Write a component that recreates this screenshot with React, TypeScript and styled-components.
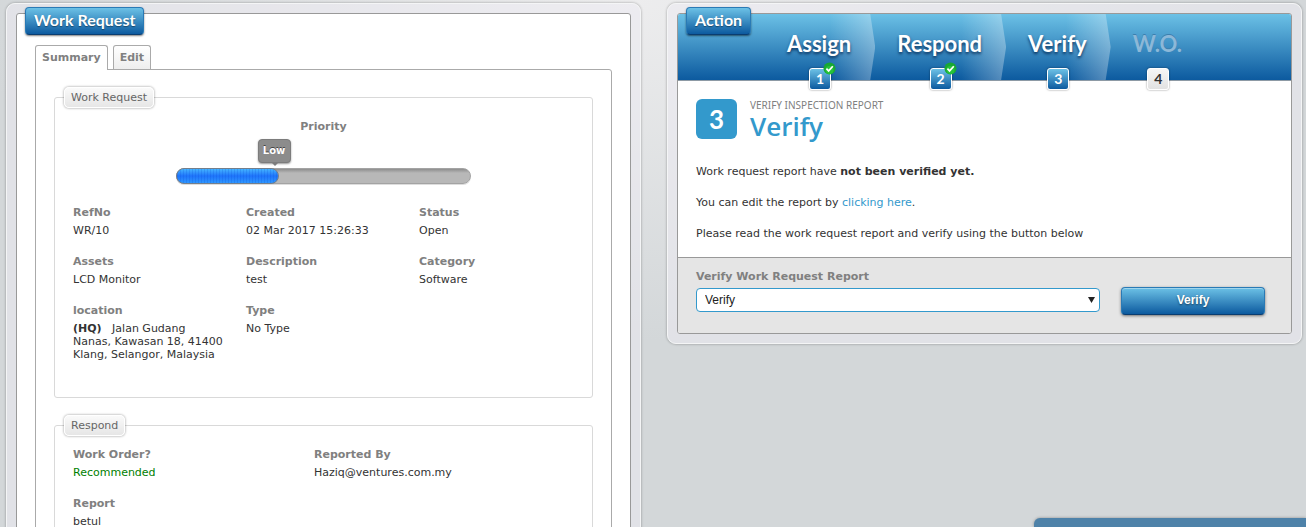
import React from "react";
import styled, { createGlobalStyle, css } from "styled-components";

const bodyFont = `Verdana, "DejaVu Sans", sans-serif`;
const headFont = `"Trebuchet MS", Lato, sans-serif`;
const blueFade = "linear-gradient(#6cc1e6, #0c5a9f)";

const GlobalStyle = createGlobalStyle`
  *, *::before, *::after { box-sizing: border-box; }
  body {
    margin: 0;
    font: 11px/13px ${bodyFont};
    color: #333;
    background: #d3d7d9;
  }
  p, h1, h2, dl, dd, ol { margin: 0; padding: 0; }
`;

const Page = styled.main`
  height: 100vh;
  overflow: hidden;
  display: grid;
  grid-template-columns: 1fr 1fr;
  align-items: start;
  gap: 26px;
  padding: 3px 4px 0 6px;
  background: radial-gradient(ellipse 50% 340px at 48% 0, #ededee, #d3d7d9);
`;

const Frame = styled.section`
  padding: 9px;
  border: 1px solid #f4f5f6;
  border-radius: 9px;
  background: rgba(236, 235, 243, 0.55);
  box-shadow: 0 0 2px 1px rgba(0, 0, 0, 0.16);
`;

const Panel = styled.div`
  position: relative;
  border: 1px solid #999;
  border-radius: 3px;
  background: #fff;
`;

const PanelTitle = styled.h1`
  position: absolute;
  z-index: 2;
  top: -7px;
  left: 8px;
  padding: 0 8px;
  height: 28px;
  border: 1px solid #2a7ab5;
  border-bottom-color: #0a3d70;
  border-radius: 4px;
  background: ${blueFade};
  box-shadow: 0 1px 2px rgba(0, 0, 0, 0.5);
  color: #fff;
  font: bold 16px/24px ${headFont};
  text-shadow: 0 1px 1px rgba(0, 0, 0, 0.4);
  white-space: nowrap;
`;

const TabArea = styled.div`
  padding: 31px 18px 18px;
`;

const TabList = styled.div`
  display: flex;
  align-items: flex-end;
  gap: 5px;
`;

const Tab = styled.button<{ $active?: boolean }>`
  height: 24px;
  padding: 0 6px;
  border: 1px solid #aaa;
  border-bottom: 0;
  border-radius: 3px 3px 0 0;
  background: linear-gradient(#fff, #eee);
  color: #808080;
  font: bold 11px/22px ${bodyFont};
  ${(p) =>
    p.$active &&
    css`
      position: relative;
      height: 25px;
      margin-bottom: -1px;
      background: #fff;
    `}
`;

const TabBody = styled.div`
  padding: 17px 18px 18px;
  border: 1px solid #aaa;
  border-radius: 0 3px 3px 3px;
`;

const Group = styled.fieldset<{ $bottom?: number }>`
  min-width: 0;
  margin: 0 0 17px;
  padding: 12px 0 ${(p) => p.$bottom ?? 18}px 18px;
  border: 1px solid #d9d9d9;
  border-radius: 3px;
`;

const GroupTitle = styled.legend`
  height: 21px;
  margin-left: -9px;
  padding: 0 6px;
  border: 1px solid #fff;
  border-radius: 5px;
  background: linear-gradient(#fafafa, #e6e6e6);
  box-shadow: 0 0 2px 1px rgba(0, 0, 0, 0.2);
  color: #666;
  line-height: 19px;
`;

const Caption = styled.h2`
  color: #808080;
  font: bold 11px/13px ${bodyFont};
`;

const Priority = styled.div`
  display: flex;
  flex-direction: column;
  align-items: center;
  gap: 35px;
  margin: 0 18px 22px 0;
`;

const Track = styled.div`
  width: 295px;
  height: 16px;
  border: 1px solid #a3a3a3;
  border-radius: 8px;
  background: linear-gradient(#8e8e8e, #b8b8b8 4px);
  box-shadow: 0 1px 0 #ddd;
`;

const TrackFill = styled.div`
  position: relative;
  height: 16px;
  margin: -1px;
  border: 1px solid #747f8c;
  border-radius: 8px;
  background:
    repeating-linear-gradient(90deg, rgba(0, 60, 200, 0.16) 0 1px, transparent 1px 3px),
    linear-gradient(#45b4ff, #1e74fb 50%, #2f97ff);
`;

const Bubble = styled.span`
  position: absolute;
  right: -13px;
  bottom: 20px;
  width: 33px;
  height: 24px;
  border: 1px solid #7c7c7c;
  border-radius: 4px;
  background: #8c8c8c;
  box-shadow: 0 1px 2px rgba(0, 0, 0, 0.4);
  color: #fff;
  font: bold 10px/22px ${bodyFont};
  text-align: center;
  text-shadow: 0 -1px 0 #444;
  &::after {
    content: "";
    position: absolute;
    top: 100%;
    left: 12px;
    border: 4px solid transparent;
    border-top-color: #7c7c7c;
    border-bottom: 0;
  }
`;

const Fields = styled.dl<{ $columns: number }>`
  display: grid;
  grid-template-columns: repeat(${(p) => p.$columns}, 1fr);
  row-gap: 18px;
  padding-right: ${(p) => (p.$columns === 2 ? 37 : 0)}px;
`;

const FieldBox = styled.div`
  padding-right: 20px;
  dt {
    margin-bottom: 5px;
    color: #808080;
    font-weight: bold;
  }
`;

const FieldValue = styled.dd<{ $good?: boolean }>`
  color: ${(p) => (p.$good ? "#008000" : "#333")};
`;

const Steps = styled.ol`
  display: flex;
  height: 67px;
  padding-left: 87px;
  border-bottom: 1px solid #8d9aa5;
  border-radius: 2px 2px 0 0;
  background: ${blueFade};
  list-style: none;
`;

const Step = styled.li<{ $off?: boolean }>`
  position: relative;
  padding: 0 24px 0 22px;
  color: ${(p) => (p.$off ? "#8cb8d8" : "#fff")};
  font: bold 22px/60px ${headFont};
  text-shadow: ${(p) => (p.$off ? "0 -1px 0 #3c7fae" : "0 2px 3px rgba(0, 30, 70, 0.8)")};
  &:not(:last-child)::after {
    content: "";
    position: absolute;
    inset: 0 0 0 auto;
    width: 45px;
    background: linear-gradient(90deg, transparent, rgba(255, 255, 255, 0.32));
    clip-path: polygon(0 0, 40px 0, 45px 50%, 40px 100%, 0 100%);
  }
`;

const StepLabel = styled.span`
  position: relative;
  z-index: 1;
`;

const StepNumber = styled.span<{ $off?: boolean }>`
  position: absolute;
  z-index: 2;
  bottom: -10px;
  left: 50%;
  width: 22px;
  height: 22px;
  margin-left: -11px;
  border: 1px solid #fff;
  border-radius: 3px;
  background: ${(p) => (p.$off ? "linear-gradient(#f6f6f6, #e2e2e2)" : blueFade)};
  box-shadow: 0 0 2px rgba(0, 0, 0, 0.5);
  color: ${(p) => (p.$off ? "#333" : "#fff")};
  font: bold 14px/19px ${headFont};
  text-align: center;
  text-shadow: none;
`;

const DoneMark = styled.svg`
  position: absolute;
  top: -7px;
  right: -6px;
  width: 13px;
  height: 13px;
`;

const Content = styled.div`
  padding: 18px 18px 17px;
  p {
    margin-top: 18px;
  }
`;

const StageHeader = styled.header`
  display: flex;
  gap: 13px;
  margin-bottom: 24px;
`;

const StageNumber = styled.div`
  width: 41px;
  height: 40px;
  border-radius: 6px;
  background: #3399cc;
  color: #fff;
  font: bold 26px/40px ${headFont};
  text-align: center;
`;

const StageText = styled.div`
  small {
    display: block;
    color: #808080;
    font: 10px/12px "Noto Sans", sans-serif;
  }
  h2 {
    color: #3399cc;
    font: 600 26px/30px "Trebuchet MS", "Open Sans", sans-serif;
  }
`;

const Link = styled.a`
  color: #3399cc;
  text-decoration: none;
`;

const ActionForm = styled.form`
  display: flex;
  align-items: flex-start;
  gap: 21px;
  padding: 12px 26px 18px 18px;
  border-top: 1px solid #999;
  border-radius: 0 0 2px 2px;
  background: #e5e5e5;
`;

const SelectField = styled.div`
  position: relative;
  flex: 1;
  label {
    display: block;
    margin-bottom: 5px;
    color: #808080;
    font-weight: bold;
  }
  select {
    display: block;
    width: 100%;
    height: 24px;
    padding: 0 8px;
    border: 1px solid #3399cc;
    border-radius: 4px;
    appearance: none;
    background: #fff;
    color: #222;
    font: 12px "Liberation Sans", Arial, sans-serif;
  }
  svg {
    position: absolute;
    right: 5px;
    bottom: 9px;
    width: 7px;
    height: 6px;
    pointer-events: none;
  }
`;

const SubmitButton = styled.button`
  width: 144px;
  height: 28px;
  margin-top: 17px;
  padding: 0 0 2px;
  border: 1px solid #2a7ab5;
  border-bottom-color: #0a3d70;
  border-radius: 4px;
  background: ${blueFade};
  box-shadow: 0 1px 3px rgba(0, 0, 0, 0.5), inset 0 1px 0 rgba(255, 255, 255, 0.35);
  color: #fff;
  font: bold 12px "Liberation Sans", Arial, sans-serif;
  text-shadow: 0 1px 2px rgba(0, 0, 0, 0.5);
`;

const ChatDock = styled.aside`
  position: fixed;
  right: 0;
  bottom: 0;
  width: 272px;
  height: 9px;
  border-radius: 6px 0 0 0;
  background: #4e82a9;
  box-shadow: 0 0 3px rgba(0, 0, 0, 0.35);
`;

function Field({ name, good, children }: { name: string; good?: boolean; children: React.ReactNode }) {
  return (
    <FieldBox>
      <dt>{name}</dt>
      <FieldValue $good={good}>{children}</FieldValue>
    </FieldBox>
  );
}

const steps = [
  { label: "Assign", done: true },
  { label: "Respond", done: true },
  { label: "Verify" },
  { label: "W.O.", off: true },
];

function StepBar() {
  return (
    <Steps>
      {steps.map((s, i) => (
        <Step key={s.label} $off={s.off}>
          <StepLabel>{s.label}</StepLabel>
          <StepNumber $off={s.off}>
            {i + 1}
            {s.done && (
              <DoneMark viewBox="0 0 13 13">
                <circle cx="6.5" cy="6.5" r="6" fill="#19a832" />
                <circle cx="6.5" cy="8" r="4" fill="#25c33b" />
                <path d="M3.4 6.6l2.2 2.3 4.2-4.6" fill="none" stroke="#fff" strokeWidth="1.7" />
              </DoneMark>
            )}
          </StepNumber>
        </Step>
      ))}
    </Steps>
  );
}

export default function App() {
  return (
    <Page>
      <GlobalStyle />
      <Frame>
        <Panel>
          <PanelTitle>Work Request</PanelTitle>
          <TabArea>
            <TabList role="tablist">
              <Tab role="tab" aria-selected="true" $active>
                Summary
              </Tab>
              <Tab role="tab" aria-selected="false">
                Edit
              </Tab>
            </TabList>
            <TabBody role="tabpanel">
              <Group $bottom={36}>
                <GroupTitle>Work Request</GroupTitle>
                <Priority>
                  <Caption>Priority</Caption>
                  <Track>
                    <TrackFill style={{ width: "35%" }}>
                      <Bubble>Low</Bubble>
                    </TrackFill>
                  </Track>
                </Priority>
                <Fields $columns={3}>
                  <Field name="RefNo">WR/10</Field>
                  <Field name="Created">02 Mar 2017 15:26:33</Field>
                  <Field name="Status">Open</Field>
                  <Field name="Assets">LCD Monitor</Field>
                  <Field name="Description">test</Field>
                  <Field name="Category">Software</Field>
                  <Field name="location">
                    <b>(HQ)</b> &nbsp; Jalan Gudang Nanas, Kawasan 18, 41400 Klang, Selangor, Malaysia
                  </Field>
                  <Field name="Type">No Type</Field>
                </Fields>
              </Group>
              <Group>
                <GroupTitle>Respond</GroupTitle>
                <Fields $columns={2}>
                  <Field name="Work Order?" good>
                    Recommended
                  </Field>
                  <Field name="Reported By">Haziq@ventures.com.my</Field>
                  <Field name="Report">betul</Field>
                </Fields>
              </Group>
            </TabBody>
          </TabArea>
        </Panel>
      </Frame>
      <Frame>
        <Panel>
          <PanelTitle>Action</PanelTitle>
          <StepBar />
          <Content>
            <StageHeader>
              <StageNumber>3</StageNumber>
              <StageText>
                <small>VERIFY INSPECTION REPORT</small>
                <h2>Verify</h2>
              </StageText>
            </StageHeader>
            <p>
              Work request report have <b>not been verified yet.</b>
            </p>
            <p>
              You can edit the report by <Link href="#edit">clicking here</Link>.
            </p>
            <p>Please read the work request report and verify using the button below</p>
          </Content>
          <ActionForm onSubmit={(e) => e.preventDefault()}>
            <SelectField>
              <label htmlFor="verdict">Verify Work Request Report</label>
              <select id="verdict">
                <option>Verify</option>
              </select>
              <svg viewBox="0 0 7 6">
                <path d="M0 0h7L3.5 6z" fill="#222" />
              </svg>
            </SelectField>
            <SubmitButton type="submit">Verify</SubmitButton>
          </ActionForm>
        </Panel>
      </Frame>
      <ChatDock />
    </Page>
  );
}
